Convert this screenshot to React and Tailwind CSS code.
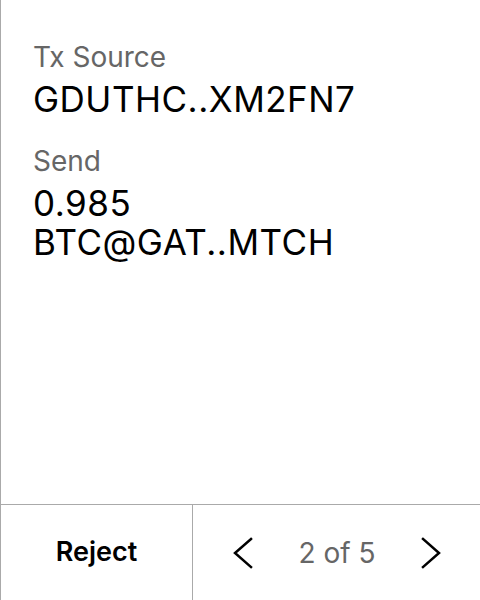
const Field = ({ label, children }) => (
  <div className="flex flex-col">
    <span className="text-[28px] leading-[34px] text-[#666]">{label}</span>
    <span className="mt-[6px] text-[35px] leading-[39px] tracking-[0.5px] text-black">{children}</span>
  </div>
);

const Chevron = ({ dir }) => (
  <svg width="20" height="32" viewBox="0 0 20 32" fill="none" stroke="black" strokeWidth="2.5" strokeLinecap="square">
    {dir === "left" ? <polyline points="18,2 2,16 18,30" /> : <polyline points="2,2 18,16 2,30" />}
  </svg>
);

export default function App() {
  return (
    <div
      className="flex h-[600px] w-[480px] flex-col border-l border-[#aaa] bg-white"
      style={{ fontFamily: "Inter, 'Noto Sans', sans-serif" }}
    >
      <div className="flex flex-1 flex-col gap-[25px] px-[32px] pt-[40px]">
        <Field label="Tx Source">GDUTHC..XM2FN7</Field>
        <Field label="Send">
          0.985
          <br />
          BTC@GAT..MTCH
        </Field>
      </div>

      <div className="flex h-[96px] border-t border-[#aaa]">
        <button className="flex w-[192px] items-center justify-center border-r border-[#aaa] text-[27px] font-semibold text-black">
          Reject
        </button>
        <div className="flex flex-1 items-center justify-between pl-[40px] pr-[39px]">
          <Chevron dir="left" />
          <span className="text-[28px] text-[#666]">2 of 5</span>
          <Chevron dir="right" />
        </div>
      </div>
    </div>
  );
}
